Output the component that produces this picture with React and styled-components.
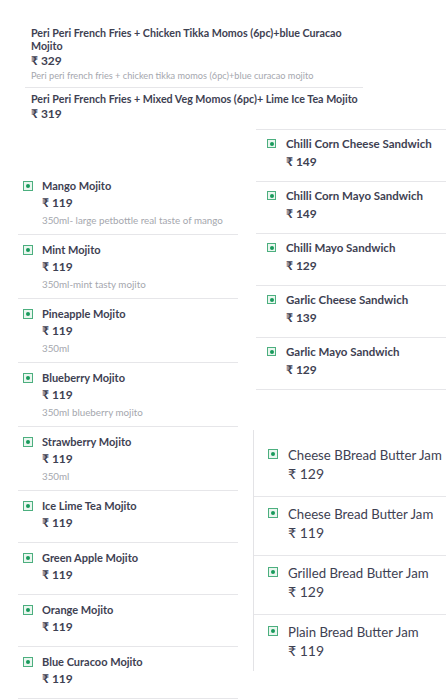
import React from 'react';
import styled, { createGlobalStyle } from 'styled-components';

const GlobalStyle = createGlobalStyle`
  html, body {
    margin: 0;
    padding: 0;
    background: #ffffff;
  }
  body {
    font-family: Lato, "Noto Sans", "DejaVu Sans", sans-serif;
    color: #3e4152;
  }
`;

const Page = styled.div`
  width: 446px;
  height: 700px;
  overflow: hidden;
  background: #ffffff;
`;

const ComboList = styled.div`
  margin-left: 25px;
  width: 338px;
`;

const ComboItem = styled.div`
  padding: ${(p) => (p.$first ? '26px 0 5px 6px' : '4px 0 0 6px')};
  border-bottom: ${(p) => (p.$first ? '1px solid #e6e6e9' : 'none')};
`;

const ComboName = styled.div`
  font-size: 10.7px;
  line-height: 13px;
  font-weight: 700;
  color: #3e4152;
  max-width: 330px;
`;

const ComboPrice = styled.div`
  margin-top: 1px;
  font-size: 12px;
  line-height: 16px;
  font-weight: 700;
  color: #3e4152;
`;

const ComboDesc = styled.div`
  margin-top: 1px;
  font-size: 9.2px;
  line-height: 12px;
  color: #a5a7ae;
  white-space: nowrap;
`;

const Columns = styled.div`
  display: flex;
  align-items: flex-start;
`;

const LeftColumn = styled.div`
  margin: 49px 0 0 18px;
  width: 220px;
`;

const RightColumn = styled.div`
  margin-left: 15px;
  flex: 1;
`;

const MenuItem = styled.div`
  display: flex;
  gap: 9px;
  box-sizing: border-box;
  min-height: 52px;
  padding: 8px 0 8px 5px;
  border-bottom: 1px solid #e6e6e9;
`;

const VegMark = styled.span`
  flex: none;
  box-sizing: border-box;
  width: ${(p) => p.$size || 10}px;
  height: ${(p) => p.$size || 10}px;
  margin-top: 2px;
  border: 1px solid #4caf7f;
  background: #eaf6ef;
  display: flex;
  align-items: center;
  justify-content: center;

  &::after {
    content: '';
    width: 4px;
    height: 4px;
    border-radius: 50%;
    background: #189a5c;
  }
`;

const Info = styled.div`
  display: flex;
  flex-direction: column;
`;

const ItemName = styled.div`
  font-size: ${(p) => p.$size || 11}px;
  line-height: 14px;
  font-weight: 700;
  color: #3e4152;
  white-space: nowrap;
`;

const ItemPrice = styled.div`
  margin-top: 2px;
  font-size: 12px;
  line-height: 16px;
  font-weight: 700;
  color: #3e4152;
`;

const ItemDesc = styled.div`
  margin-top: 3px;
  font-size: 9.8px;
  line-height: 12px;
  color: #a5a7ae;
  white-space: nowrap;
`;

const SandwichGroup = styled.div`
  margin: 7px 0 0 3px;
  border-top: 1px solid #e6e6e9;
`;

const SandwichItem = styled.div`
  display: flex;
  gap: 10px;
  padding: 7px 0 11px 11px;
  border-bottom: 1px solid #e6e6e9;
`;

const SandwichPrice = styled(ItemPrice)`
  margin-top: 3px;
`;

const BreadGroup = styled.div`
  margin-top: 40px;
  padding-top: 8px;
  border-left: 1px solid #e3e3e6;
`;

const BreadItem = styled.div`
  display: flex;
  gap: 10px;
  padding: 9px 0 13px 14px;
  border-bottom: 1px solid #e6e6e9;

  &:last-child {
    border-bottom: none;
    padding-bottom: 11px;
  }
`;

const BreadName = styled.div`
  font-size: 13.2px;
  line-height: 16px;
  font-weight: 400;
  color: #3e4152;
  white-space: nowrap;
`;

const BreadPrice = styled.div`
  margin-top: 2px;
  font-size: 14px;
  line-height: 18px;
  font-weight: 400;
  color: #3e4152;
`;

const combos = [
  {
    name: 'Peri Peri French Fries + Chicken Tikka Momos (6pc)+blue Curacao Mojito',
    price: 329,
    desc: 'Peri peri french fries + chicken tikka momos (6pc)+blue curacao mojito',
  },
  {
    name: 'Peri Peri French Fries + Mixed Veg Momos (6pc)+ Lime Ice Tea Mojito',
    price: 319,
  },
];

const mojitos = [
  { name: 'Mango Mojito', price: 119, desc: '350ml- large petbottle real taste of mango' },
  { name: 'Mint Mojito', price: 119, desc: '350ml-mint tasty mojito' },
  { name: 'Pineapple Mojito', price: 119, desc: '350ml' },
  { name: 'Blueberry Mojito', price: 119, desc: '350ml blueberry mojito' },
  { name: 'Strawberry Mojito', price: 119, desc: '350ml' },
  { name: 'Ice Lime Tea Mojito', price: 119 },
  { name: 'Green Apple Mojito', price: 119 },
  { name: 'Orange Mojito', price: 119 },
  { name: 'Blue Curacoo Mojito', price: 119 },
];

const sandwiches = [
  { name: 'Chilli Corn Cheese Sandwich', price: 149 },
  { name: 'Chilli Corn Mayo Sandwich', price: 149 },
  { name: 'Chilli Mayo Sandwich', price: 129 },
  { name: 'Garlic Cheese Sandwich', price: 139 },
  { name: 'Garlic Mayo Sandwich', price: 129 },
];

const breads = [
  { name: 'Cheese BBread Butter Jam', price: 129 },
  { name: 'Cheese Bread Butter Jam', price: 119 },
  { name: 'Grilled Bread Butter Jam', price: 129 },
  { name: 'Plain Bread Butter Jam', price: 119 },
];

export default function App() {
  return (
    <Page>
      <GlobalStyle />
      <ComboList>
        {combos.map((item, index) => (
          <ComboItem key={item.name} $first={index === 0}>
            <ComboName>{item.name}</ComboName>
            <ComboPrice>₹ {item.price}</ComboPrice>
            {item.desc && <ComboDesc>{item.desc}</ComboDesc>}
          </ComboItem>
        ))}
      </ComboList>
      <Columns>
        <LeftColumn>
          {mojitos.map((item) => (
            <MenuItem key={item.name}>
              <VegMark />
              <Info>
                <ItemName>{item.name}</ItemName>
                <ItemPrice>₹ {item.price}</ItemPrice>
                {item.desc && <ItemDesc>{item.desc}</ItemDesc>}
              </Info>
            </MenuItem>
          ))}
        </LeftColumn>
        <RightColumn>
          <SandwichGroup>
            {sandwiches.map((item) => (
              <SandwichItem key={item.name}>
                <VegMark $size={9} />
                <Info>
                  <ItemName $size={11.5}>{item.name}</ItemName>
                  <SandwichPrice>₹ {item.price}</SandwichPrice>
                </Info>
              </SandwichItem>
            ))}
          </SandwichGroup>
          <BreadGroup>
            {breads.map((item) => (
              <BreadItem key={item.name}>
                <VegMark />
                <Info>
                  <BreadName>{item.name}</BreadName>
                  <BreadPrice>₹ {item.price}</BreadPrice>
                </Info>
              </BreadItem>
            ))}
          </BreadGroup>
        </RightColumn>
      </Columns>
    </Page>
  );
}
